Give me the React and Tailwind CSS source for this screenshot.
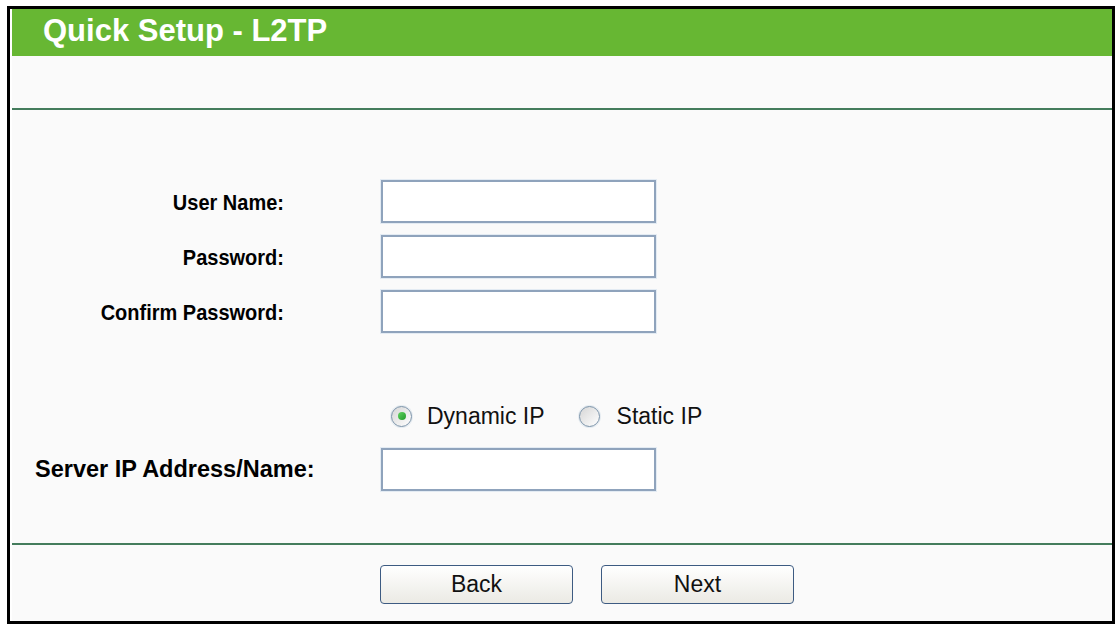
import React from 'react';

const font = { fontFamily: '"Liberation Sans", Arial, sans-serif' };

function TextField() {
  return (
    <input
      type="text"
      className="w-[275px] h-[43px] bg-white border-2 border-[#8fa3bc] outline-none shadow-[0_0_0_1px_#e3ebf3]"
    />
  );
}

function Radio({ checked, label, gap }) {
  return (
    <label className={`flex items-center cursor-pointer ${gap}`}>
      <span className="w-[21px] h-[21px] rounded-full border-[1.5px] border-[#7a92a8] bg-gradient-to-br from-[#d6d6d6] to-white flex items-center justify-center shadow-[0_0_0_1px_#e6ecf1]">
        {checked && (
          <span className="w-[8px] h-[8px] rounded-full bg-gradient-to-br from-[#5fd35f] to-[#1f9a2a]" />
        )}
      </span>
      <span className="text-[23px] text-[#111] leading-none">{label}</span>
    </label>
  );
}

function Row({ label, children }) {
  return (
    <div className="flex items-center">
      <div className="w-[272px] text-right text-[20px] font-bold text-black leading-none scale-y-110 origin-right">{label}</div>
      <div className="ml-[97px]">{children}</div>
    </div>
  );
}

export default function App() {
  return (
    <div className="w-[1118px] h-[631px] bg-white pt-[6px] pl-[7px]" style={font}>
      <div className="w-[1108px] h-[618px] border-[3px] border-black flex flex-col pl-[2px] bg-white">
        {/* Header */}
        <div className="h-[47px] bg-[#67b733] flex items-center pl-[31px] pb-[4px] shrink-0">
          <h1 className="text-white font-bold text-[31px] leading-none">Quick Setup - L2TP</h1>
        </div>
        <div className="h-[52px] bg-[#fafafa] shrink-0" />
        <div className="h-[2px] bg-[#447c5c] shrink-0" />

        {/* Form */}
        <div className="flex-1 bg-[#fafafa] flex flex-col pt-[70px]">
          <div className="flex flex-col gap-[12px]">
            <Row label="User Name:"><TextField /></Row>
            <Row label="Password:"><TextField /></Row>
            <Row label="Confirm Password:"><TextField /></Row>
          </div>

          <div className="flex items-center gap-[34px] ml-[379px] mt-[72px] h-[22px]">
            <Radio checked label="Dynamic IP" gap="gap-[15px]" />
            <Radio label="Static IP" gap="gap-[17px]" />
          </div>

          <div className="flex items-center mt-[21px]">
            <div className="w-[369px] pl-[23px] text-[23.5px] font-bold text-black leading-none">
              Server IP Address/Name:
            </div>
            <TextField />
          </div>
        </div>

        <div className="h-[2px] bg-[#447c5c] shrink-0" />

        {/* Buttons */}
        <div className="h-[76px] bg-[#fafafa] flex items-start pt-[20px] pl-[368px] gap-[28px] shrink-0">
          <button className="w-[193px] h-[39px] rounded-[4px] border-[1.5px] border-[#3d5b82] bg-gradient-to-b from-white to-[#ebeae4] text-[23px] text-[#111] leading-none">
            Back
          </button>
          <button className="w-[193px] h-[39px] rounded-[4px] border-[1.5px] border-[#3d5b82] bg-gradient-to-b from-white to-[#ebeae4] text-[23px] text-[#111] leading-none">
            Next
          </button>
        </div>
      </div>
    </div>
  );
}
